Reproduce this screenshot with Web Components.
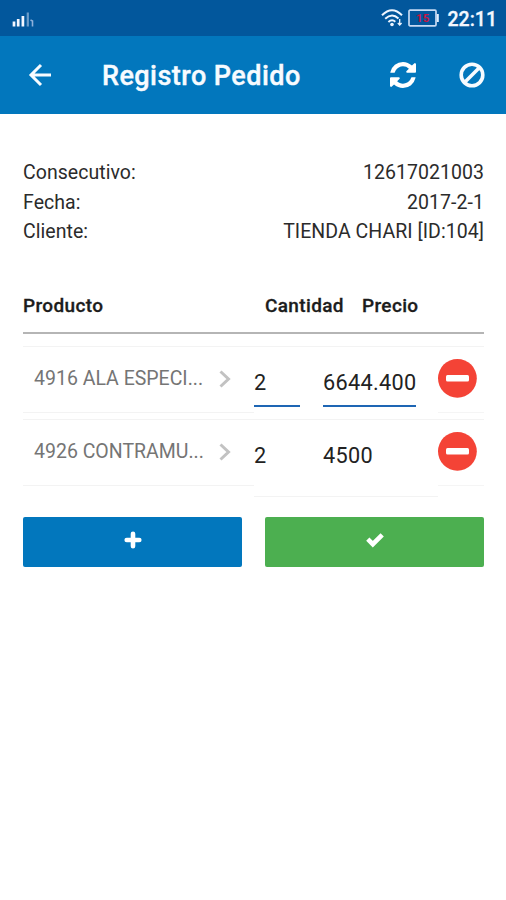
<!DOCTYPE html>
<html lang="es">
<head>
<meta charset="utf-8">
<title>Registro Pedido</title>
<style>
html,body{margin:0;background:#fff}
body{width:506px;height:900px;overflow:hidden;font-family:Roboto,"Noto Sans",sans-serif;color:#222}
main{padding:44px 22px 0 23px}
</style>
</head>
<body>
<status-bar time="22:11" level="15"></status-bar>
<app-header>Registro Pedido</app-header>
<main>
<info-row label="Consecutivo:">12617021003</info-row>
<info-row label="Fecha:">2017-2-1</info-row>
<info-row label="Cliente:">TIENDA CHARI [ID:104]</info-row>
<order-table>
<order-row active name="4916 ALA ESPECI..." qty="2" price="6644.400"></order-row>
<order-row name="4926 CONTRAMU..." qty="2" price="4500"></order-row>
</order-table>
<action-bar></action-bar>
</main>
<script>
function define(tag, html) {
  customElements.define(tag, class extends HTMLElement {
    connectedCallback() {
      if (this.shadowRoot) return;
      this.attachShadow({mode: 'open'}).innerHTML = typeof html === 'function' ? html(this) : html;
    }
  });
}
define('status-bar', el => `
<style>
:host{display:flex;height:36px;background:#02579c;color:#f4f8ff;align-items:center;box-sizing:border-box;padding:0 9px 0 12px}
.signal{margin-right:auto;margin-top:2px}
.time{font-size:19.5px;font-weight:500;line-height:36px;margin-left:8px;padding-top:4px;-webkit-text-stroke:.3px}
svg{display:block}
</style>
<svg class="signal" width="24" height="16" viewBox="0 0 24 16">
<path d="M2 15.500V10.500M6.200 15.500V8M10.900 15.500V5" stroke="#f4f7ff" stroke-width="2.700"/>
<path d="M15.800 15.500V1.500" stroke="#6c9cc9" stroke-width="2.200"/><path d="M20.500 15.500V10L18.500 9" stroke="#8eb0db" stroke-width="1.600" fill="none"/></svg>
<svg width="24" height="20" viewBox="0 0 24 20" fill="none" stroke="#edf5ff" stroke-width="2">
<path d="M1 7.200Q11 -2.800 21 7.200M4.200 10.700Q11 4.400 17.500 10.500M7.400 14Q11 10.700 14.300 13.700"/><circle cx="11" cy="16.500" r="1.800" fill="#edf5ff" stroke="none"/><path d="M18.700 11v6M16.800 15l1.900 2 1.900-2" stroke-width="1.300"/></svg>
<svg width="32" height="18" viewBox="0 0 32 18" style="margin-left:3px">
<rect x="1" y="1.200" width="27" height="15.600" rx="1" fill="none" stroke="#c6daf3" stroke-width="1.700"/><path d="M29.800 5v8" stroke="#e4efff" stroke-width="2"/>
<text x="14.700" y="13" text-anchor="middle" font-family="Roboto" font-size="11.500" font-weight="700" fill="#c51543">${el.getAttribute('level')}</text></svg>
<span class="time">${el.getAttribute('time')}</span>`);
define('app-header', `
<style>
:host{display:flex;height:78px;background:#0277bd;color:#f7fbff;align-items:center;box-sizing:border-box;padding:0 21px 0 28px}
h1{margin:0 auto 0 50px;font-size:27px;font-weight:500;line-height:40px;padding-top:2px;letter-spacing:.45px;-webkit-text-stroke:.4px;white-space:nowrap}
svg{display:block}
</style>
<svg width="24" height="24" viewBox="0 0 24 24" fill="none" stroke="#f7fbff" stroke-width="3"><path d="M23 12H3M13 2L3 12L13 22"/></svg>
<h1><slot></slot></h1>
<svg width="26" height="26" viewBox="0 0 1536 1536" fill="#fff"><path d="M1511 928q0 5-1 7-64 268-268 434.500T764 1536q-146 0-282.500-55T238 1324l-129 129q-19 19-45 19t-45-19-19-45V960q0-26 19-45t45-19h448q26 0 45 19t19 45-19 45l-137 137q71 66 161 102t187 36q134 0 250-65t186-179q11-17 53-117 8-23 30-23h192q13 0 22.500 9.500t9.500 22.500zm25-800v448q0 26-19 45t-45 19h-448q-26 0-45-19t-19-45 19-45l138-138Q969 256 768 256q-134 0-250 65T332 500q-11 17-53 117-8 23-30 23H50q-13 0-22.500-9.500T18 608v-7q65-268 270-434.500T768 0q146 0 284 55.500T1297 212l130-129q19-19 45-19t45 19 19 45z"/></svg>
<svg width="26" height="26" viewBox="0 0 26 26" fill="none" stroke="#f7fbff" stroke-width="3.600" style="margin-left:43px"><circle cx="13" cy="13" r="10.800"/><path d="M5.500 20.500L20.500 5.500"/></svg>`);
define('info-row', el => `
<style>
:host{display:flex;justify-content:space-between;height:29.500px;line-height:30px;font-size:19.500px;letter-spacing:.05px;color:#2b2b2b;white-space:nowrap}
</style>
<span>${el.getAttribute('label')}</span><span><slot></slot></span>`);
define('order-table', `
<style>
:host{display:block;margin-top:42px}
.head{display:grid;grid-template-columns:242px 97px 1fr;height:43px;line-height:33px;font-size:19px;font-weight:500;letter-spacing:.35px;-webkit-text-stroke:.3px;color:#1c1c1c;border-bottom:2px solid #b5b5b5;margin-bottom:12px}
</style>
<div class="head"><span>Producto</span><span>Cantidad</span><span>Precio</span></div>
<slot></slot>`);
define('order-row', el => `
<style>
:host{display:grid;grid-template-columns:231px 184px 46px;height:67px;margin-bottom:5px;border-top:1px solid #f3f3f3;align-items:start;white-space:nowrap}
.name{display:flex;justify-content:space-between;align-items:center;height:66px;box-sizing:border-box;padding:0 23px 2px 11px;border-bottom:1px solid #f3f3f3;font-size:19.500px;color:#757575}
.name svg{margin-top:2px}
.num{height:60px;box-sizing:border-box;font-size:21.700px;letter-spacing:.3px;line-height:72px;color:#222;border-bottom:2px solid transparent;overflow:hidden}
:host([active]) .num{border-color:#1e66b4}
:host(:not([active])) .num{height:76px;border-bottom:0}
:host(:not([active])) .mid{border-bottom:1px solid #f3f3f3;height:76px}
.mid{display:grid;grid-template-columns:46px 93px;column-gap:23px}
.del{height:66px;box-sizing:border-box;border-bottom:1px solid #f5f5f5}
svg{display:block}
</style>
<div class="name"><span>${el.getAttribute('name')}</span><svg width="12" height="18" viewBox="0 0 12 18" fill="none" stroke="#c2c2c2" stroke-width="3"><path d="M1.500 1.500L9.500 9L1.500 16.500"/></svg></div>
<div class="mid"><div class="num">${el.getAttribute('qty')}</div><div class="num">${el.getAttribute('price')}</div></div>
<div class="del"><svg width="39" height="65" viewBox="0 0 39 65"><circle cx="19.400" cy="31.300" r="19.400" fill="#f44336"/><rect x="8" y="28" width="23" height="6.600" rx="1.500" fill="#fff"/></svg></div>`);
define('action-bar', `
<style>
:host{display:grid;grid-template-columns:219px 219px;column-gap:23px;margin-top:30px}
button{height:50px;border:0;border-radius:2px;padding:0 0 3px;background:#0277bd;display:flex;align-items:center;justify-content:center}
.ok{background:#4caf50}
svg{display:block}
</style>
<button aria-label="Agregar"><svg width="18" height="18" viewBox="0 0 18 18"><path d="M9 2.700v12.600M2.700 9h12.600" stroke="#fff" stroke-width="4.600" stroke-linecap="round" stroke-linejoin="round"/></svg></button>
<button class="ok" aria-label="Confirmar"><svg width="18" height="16" viewBox="0 0 18 16" fill="none" stroke="#fff" stroke-width="4.600"><path d="M1.800 7.200L6.800 12.200L16.200 2.800"/></svg></button>`);
</script>
</body>
</html>
